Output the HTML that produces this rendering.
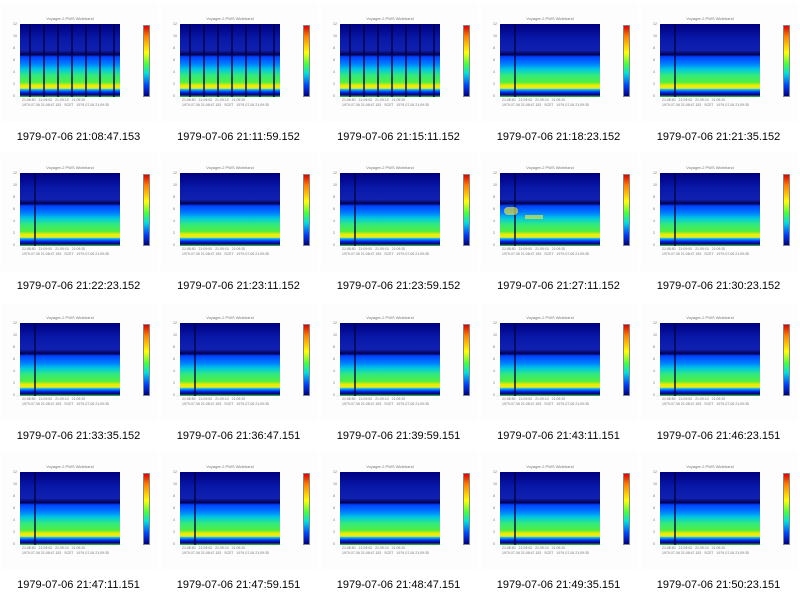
<!DOCTYPE html>
<html><head><meta charset="utf-8"><style>
body{margin:0;width:800px;height:596px;background:#fff;position:relative;overflow:hidden;font-family:"Liberation Sans",sans-serif}
.c{position:absolute;width:160px;height:149px}
.img{position:absolute;left:1px;top:4px;width:157px;height:118px;background:#fdfdfd}
.t{position:absolute;left:20px;top:16px;width:100px;text-align:center;font-size:4px;color:#777}
.p{position:absolute;left:20px;top:24px;width:100px;height:73px;
background:linear-gradient(to bottom,#000080 0%,#0818a8 20%,#1020b0 36%,#000050 42%,#0040ff 45%,#0080ff 55%,#00c8e0 62%,#30e880 70%,#50f040 80%,#f0e800 84%,#e0f020 88%,#00b0ff 90%,#0020e0 94%,#000070 97%,#40d040 100%)}
.cb{position:absolute;left:143px;top:25px;width:7px;height:72px;border:0.5px solid #888;box-sizing:border-box;
background:linear-gradient(to bottom,#e00000,#ff8000 15%,#ffff00 38%,#40ff40 55%,#00e0e0 68%,#0040ff 85%,#000080)}
.ln{position:absolute;top:0;width:1.5px;height:100%;background:#000040;opacity:.7}
.ax{position:absolute;font-size:3.5px;color:#777}
.cap{position:absolute;left:0;top:131px;width:157px;text-align:center;font-size:11px;color:#000;white-space:nowrap}
</style></head><body>
<div class="c"><div class="cap">1979-07-06 21:08:47.153</div></div>
<div class="c"><div class="cap">1979-07-06 21:11:59.152</div></div>
<div class="c"><div class="cap">1979-07-06 21:15:11.152</div></div>
<div class="c"><div class="cap">1979-07-06 21:18:23.152</div></div>
<div class="c"><div class="cap">1979-07-06 21:21:35.152</div></div>
<div class="c"><div class="cap">1979-07-06 21:22:23.152</div></div>
<div class="c"><div class="cap">1979-07-06 21:23:11.152</div></div>
<div class="c"><div class="cap">1979-07-06 21:23:59.152</div></div>
<div class="c"><div class="cap">1979-07-06 21:27:11.152</div></div>
<div class="c"><div class="cap">1979-07-06 21:30:23.152</div></div>
<div class="c"><div class="cap">1979-07-06 21:33:35.152</div></div>
<div class="c"><div class="cap">1979-07-06 21:36:47.151</div></div>
<div class="c"><div class="cap">1979-07-06 21:39:59.151</div></div>
<div class="c"><div class="cap">1979-07-06 21:43:11.151</div></div>
<div class="c"><div class="cap">1979-07-06 21:46:23.151</div></div>
<div class="c"><div class="cap">1979-07-06 21:47:11.151</div></div>
<div class="c"><div class="cap">1979-07-06 21:47:59.151</div></div>
<div class="c"><div class="cap">1979-07-06 21:48:47.151</div></div>
<div class="c"><div class="cap">1979-07-06 21:49:35.151</div></div>
<div class="c"><div class="cap">1979-07-06 21:50:23.151</div></div>
<script>
var cs=document.querySelectorAll('.c');
cs.forEach(function(c,i){
 var col=i%5,row=Math.floor(i/5);
 c.style.left=(col*160)+'px';c.style.top=Math.round(row*149.3)+'px';
 var h='<div class="img"></div><div class="t">Voyager-2 PWS Wideband</div><div class="p">';
 if(i<3){for(var k=0;k<7;k++)h+='<div class="ln" style="left:'+(9+k*14)+'px"></div>';}
 else if(i!=6&&i!=17)h+='<div class="ln" style="left:14px"></div>';
 if(i==8){h+='<div style="position:absolute;left:4px;top:34px;width:14px;height:8px;background:#e0e040;opacity:.7;border-radius:4px"></div><div style="position:absolute;left:25px;top:42px;width:18px;height:4px;background:#e0e040;opacity:.7"></div>';}
 h+='</div><div class="cb"></div>';
 for(var y=0;y<7;y++)h+='<div class="ax" style="left:13px;top:'+(22+y*12)+'px">'+(12-y*2)+'</div>';
 h+='<div class="ax" style="left:22px;top:98px">21:08:50 &nbsp; 21:09:00 &nbsp; 21:09:10 &nbsp; 21:09:20</div>';
 h+='<div class="ax" style="left:22px;top:103px">1979-07-06 21:08:47.153 &nbsp; SCET &nbsp; 1979-07-06 21:09:35</div>';
 c.insertAdjacentHTML('afterbegin',h);
});
</script>
</body></html>
